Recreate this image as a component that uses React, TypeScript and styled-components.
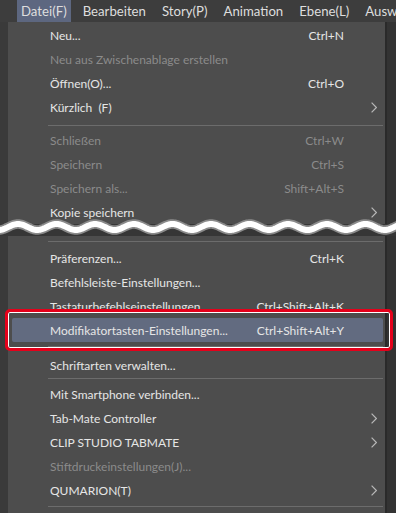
import React from "react";
import styled, { createGlobalStyle } from "styled-components";

const Global = createGlobalStyle`
  html, body { margin: 0; padding: 0; background: #363636; }
`;

const Page = styled.div`
  width: 396px;
  height: 513px;
  overflow: hidden;
  background: #363636;
  font-family: Lato, "Noto Sans", "Liberation Sans", sans-serif;
  font-size: 12px;
`;

const MenuBar = styled.div`
  height: 22px;
  display: flex;
  align-items: stretch;
  gap: 8px;
  padding-left: 17px;
  background: #3d3d3d;
  font-size: 13.2px;
  white-space: nowrap;
  overflow: hidden;
`;

const MenuTitle = styled.div<{ $active?: boolean }>`
  display: flex;
  align-items: center;
  flex: none;
  padding: 0 4px;
  color: #dedede;
  background: ${(p) => (p.$active ? "#5d6780" : "transparent")};
`;

const Section = styled.div`
  display: flex;
`;

const LeftStrip = styled.div`
  width: 8px;
  flex: none;
  background: #3a3a3a;
`;

const RightStrip = styled.div`
  flex: 1;
  background: #333333;
  border-left: 2px solid #2a2a2a;
`;

const Dropdown = styled.div<{ $pt: number }>`
  width: 377px;
  flex: none;
  box-sizing: border-box;
  padding: ${(p) => p.$pt}px 2px 0 4px;
  background: #4d4d4d;
`;

const Row = styled.div<{ $disabled?: boolean; $selected?: boolean }>`
  position: relative;
  height: 24px;
  display: grid;
  grid-template-columns: 1fr auto 39px;
  align-items: center;
  padding-left: 38px;
  border-radius: 2px;
  white-space: pre;
  color: ${(p) => (p.$disabled ? "#8b8b8b" : "#e6e6e6")};
  background: ${(p) => (p.$selected ? "#626b80" : "transparent")};
`;

const Shortcut = styled.span`
  text-align: right;
`;

const ArrowCell = styled.span`
  display: flex;
  justify-content: flex-end;
  padding-right: 6px;
`;

const Separator = styled.div<{ $above: number; $below: number }>`
  height: 1px;
  margin: ${(p) => p.$above}px 0 ${(p) => p.$below}px 36px;
  background: #6c6c6c;
`;

const Highlight = styled.div`
  position: absolute;
  top: -9px;
  bottom: -9px;
  left: -7px;
  right: -10px;
  border: 3px solid #e5001a;
  border-radius: 5px;
  box-shadow: inset 0 0 0 1px #ffffff;
  pointer-events: none;
`;

const WaveBox = styled.div`
  position: relative;
  z-index: 2;
  height: 18px;
  margin-top: -6px;
`;

const Chevron = () => (
  <svg width="6" height="11" viewBox="0 0 6 11">
    <polyline points="0.6,0.6 5.4,5.5 0.6,10.4" fill="none" stroke="#b8b8b8" strokeWidth="1.2" />
  </svg>
);

const wavePath = (() => {
  const pts: string[] = [];
  for (let x = -2; x <= 398; x += 1) {
    const y = 9 - 3 * Math.cos((2 * Math.PI * (x - 18)) / 38.6);
    pts.push(`${x === -2 ? "M" : "L"}${x},${y.toFixed(2)}`);
  }
  return pts.join(" ");
})();

const Wave = () => (
  <WaveBox>
    <svg width="396" height="18" viewBox="0 0 396 18">
      <path d={wavePath} fill="none" stroke="#8a8a8a" strokeWidth="9.5" />
      <path d={wavePath} fill="none" stroke="#ffffff" strokeWidth="6" />
    </svg>
  </WaveBox>
);

type Item = {
  label: string;
  shortcut?: string;
  disabled?: boolean;
  sub?: boolean;
  selected?: boolean;
};

const MenuRow = ({ item }: { item: Item }) => (
  <Row $disabled={item.disabled} $selected={item.selected}>
    <span>{item.label}</span>
    <Shortcut>{item.shortcut ?? ""}</Shortcut>
    <ArrowCell>{item.sub ? <Chevron /> : null}</ArrowCell>
    {item.selected ? <Highlight /> : null}
  </Row>
);

const titles = ["Datei(F)", "Bearbeiten", "Story(P)", "Animation", "Ebene(L)", "Ausw"];

export default function App() {
  return (
    <Page>
      <Global />
      <MenuBar>
        {titles.map((t, i) => (
          <MenuTitle key={t} $active={i === 0}>
            {t}
          </MenuTitle>
        ))}
      </MenuBar>
      <Section>
        <LeftStrip />
        <Dropdown $pt={1}>
          <MenuRow item={{ label: "Neu...", shortcut: "Ctrl+N" }} />
          <MenuRow item={{ label: "Neu aus Zwischenablage erstellen", disabled: true }} />
          <MenuRow item={{ label: "Öffnen(O)...", shortcut: "Ctrl+O" }} />
          <MenuRow item={{ label: "Kürzlich  (F)", sub: true }} />
          <Separator $above={6} $below={2} />
          <MenuRow item={{ label: "Schließen", shortcut: "Ctrl+W", disabled: true }} />
          <MenuRow item={{ label: "Speichern", shortcut: "Ctrl+S", disabled: true }} />
          <MenuRow item={{ label: "Speichern als...", shortcut: "Shift+Alt+S", disabled: true }} />
          <MenuRow item={{ label: "Kopie speichern", sub: true }} />
        </Dropdown>
        <RightStrip />
      </Section>
      <Wave />
      <Section>
        <LeftStrip />
        <Dropdown $pt={0}>
          <Separator $above={5} $below={4} />
          <MenuRow item={{ label: "Präferenzen...", shortcut: "Ctrl+K" }} />
          <MenuRow item={{ label: "Befehlsleiste-Einstellungen..." }} />
          <MenuRow item={{ label: "Tastaturbefehlseinstellungen...", shortcut: "Ctrl+Shift+Alt+K" }} />
          <MenuRow item={{ label: "Modifikatortasten-Einstellungen...", shortcut: "Ctrl+Shift+Alt+Y", selected: true }} />
          <Separator $above={4} $below={6} />
          <MenuRow item={{ label: "Schriftarten verwalten..." }} />
          <Separator $above={1} $below={3} />
          <MenuRow item={{ label: "Mit Smartphone verbinden..." }} />
          <MenuRow item={{ label: "Tab-Mate Controller", sub: true }} />
          <MenuRow item={{ label: "CLIP STUDIO TABMATE", sub: true }} />
          <MenuRow item={{ label: "Stiftdruckeinstellungen(J)...", disabled: true }} />
          <MenuRow item={{ label: "QUMARION(T)", sub: true }} />
          <Separator $above={4} $below={10} />
        </Dropdown>
        <RightStrip />
      </Section>
    </Page>
  );
}
